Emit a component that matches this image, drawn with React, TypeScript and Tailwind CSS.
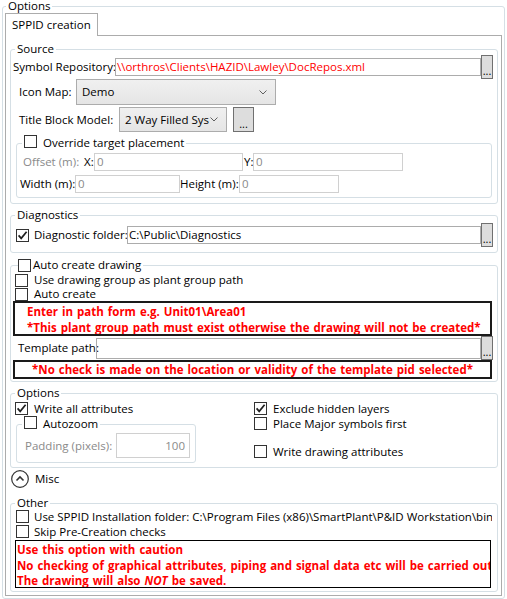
import React from 'react'

function Check({ checked }: { checked?: boolean }) {
  return (
    <span className="w-[13px] h-[13px] shrink-0 border border-[#333333] bg-white flex items-center justify-center">
      {checked && (
        <svg width="11" height="11" viewBox="0 0 11 11">
          <path d="M1.6 5.4 L4.2 8.4 L9.6 1.8" fill="none" stroke="#1f1f1f" strokeWidth="1.7" />
        </svg>
      )}
    </span>
  )
}

function Dots({ className }: { className: string }) {
  return (
    <button className={`shrink-0 border border-[#707070] bg-[#dddddd] flex items-end justify-center pb-[3px] leading-[8px] text-[11px] ${className}`}>
      ...
    </button>
  )
}

function Combo({ value, className }: { value: string; className: string }) {
  return (
    <div className={`shrink-0 border border-[#acacac] bg-gradient-to-b from-[#f0f0f0] to-[#e5e5e5] flex items-center justify-between pl-[5px] pr-[8px] ${className}`}>
      <span className="whitespace-nowrap">{value}</span>
      <svg width="8" height="5" viewBox="0 0 8 5">
        <path d="M0.5 0.5 L4 4 L7.5 0.5" fill="none" stroke="#606060" strokeWidth="1" />
      </svg>
    </div>
  )
}

function Group({
  legend,
  className,
  legendClass,
  children,
}: {
  legend: React.ReactNode
  className: string
  legendClass?: string
  children: React.ReactNode
}) {
  return (
    <fieldset className={`border border-[#d5dfe5] rounded-[3px] ${className}`}>
      <legend className={`whitespace-nowrap ${legendClass ?? 'h-[14px] leading-[14px] ml-[4px] px-[2px]'}`}>{legend}</legend>
      {children}
    </fieldset>
  )
}

export default function App() {
  return (
    <div className="w-[507px] h-[599px] bg-white overflow-hidden text-[11.5px] text-black font-['Segoe_UI','Open_Sans',sans-serif]">
      <Group legend="Options" className="ml-[2px] w-[503px] h-[599px]" legendClass="h-[12px] leading-[12px] ml-[3px] px-[2px]">
        {/* tab header */}
        <div className="mt-[1px] ml-[2px] w-[93px] h-[23px] relative z-[1] bg-white border border-b-0 border-[#acacac] flex items-center pl-[6px]">
          SPPID creation
        </div>
        <div className="-mt-px ml-[2px] w-[497px] h-[561px] border border-[#acacac] pl-[4px]">
          {/* Source */}
          <Group legend="Source" className="mt-[6px] w-[488px] h-[162px]">
            <div className="-mt-px h-[24px] flex items-center">
              <span className="w-[104px] pl-[2px] whitespace-nowrap">Symbol Repository:</span>
              <div className="w-[366px] h-[18px] border border-[#acacac] flex items-center pl-[1px] text-[#ff0000] whitespace-nowrap overflow-hidden">
                \\orthros\Clients\HAZID\Lawley\DocRepos.xml
              </div>
              <Dots className="w-[12px] h-[24px]" />
            </div>
            <div className="h-[26px] flex items-center">
              <span className="w-[65px] pl-[8px] whitespace-nowrap">Icon Map:</span>
              <Combo value="Demo" className="w-[200px] h-[26px]" />
            </div>
            <div className="mt-[2px] h-[25px] flex items-center">
              <span className="w-[108px] pl-[8px] whitespace-nowrap">Title Block Model:</span>
              <Combo value="2 Way Filled Sys" className="w-[108px] h-[25px]" />
              <Dots className="ml-[6px] w-[21px] h-[25px]" />
            </div>
            <Group
              className="mt-[4px] ml-[5px] w-[476px] h-[62px]"
              legendClass="h-[14px] ml-[5px] pl-[2px] pr-[2px]"
              legend={
                <span className="flex items-center h-[14px] gap-[6px]">
                  <span className="mb-[3px]"><Check /></span>
                  Override target placement
                </span>
              }
            >
              <div className="mt-[3px] h-[18px] flex items-center">
                <span className="w-[67px] pl-[6px] text-[#8a8a8a] whitespace-nowrap">Offset (m):</span>
                <span className="w-[10px]">X:</span>
                <div className="w-[149px] h-[18px] border border-[#d0d0d0] pl-[2px] text-[#8a8a8a] flex items-center">0</div>
                <span className="w-[10px] pl-[1px]">Y:</span>
                <div className="w-[150px] h-[18px] border border-[#d0d0d0] pl-[2px] text-[#8a8a8a] flex items-center">0</div>
              </div>
              <div className="mt-[4px] h-[18px] flex items-center">
                <span className="w-[58px] pl-[3px] whitespace-nowrap">Width (m):</span>
                <div className="w-[105px] h-[18px] border border-[#d0d0d0] pl-[2px] text-[#8a8a8a] flex items-center">0</div>
                <span className="w-[59px] whitespace-nowrap">Height (m):</span>
                <div className="w-[100px] h-[18px] border border-[#d0d0d0] pl-[2px] text-[#8a8a8a] flex items-center">0</div>
              </div>
            </Group>
          </Group>

          {/* Diagnostics */}
          <Group legend="Diagnostics" className="mt-[4px] w-[488px] h-[45px]">
            <div className="mt-[1px] h-[24px] flex items-center pl-[5px]">
              <Check checked />
              <span className="ml-[5px] w-[93px] whitespace-nowrap">Diagnostic folder:</span>
              <div className="w-[354px] h-[18px] border border-[#acacac] pl-[1px] flex items-center whitespace-nowrap">
                C:\Public\Diagnostics
              </div>
              <Dots className="w-[12px] h-[24px]" />
            </div>
          </Group>

          {/* Auto create drawing */}
          <Group
            className="mt-[5px] w-[488px] h-[124px]"
            legendClass="h-[14px] ml-[7px] pr-[2px]"
            legend={
              <span className="flex items-center h-[14px] gap-[2px]">
                <Check />
                Auto create drawing
              </span>
            }
          >
            <div className="mt-[1px] h-[14px] flex items-center pl-[4px] gap-[6px]">
              <Check />
              <span>Use drawing group as plant group path</span>
            </div>
            <div className="h-[14px] flex items-center pl-[4px] gap-[6px]">
              <Check />
              <span>Auto create</span>
            </div>
            <div className="ml-[2px] w-[479px] h-[35px] border-2 border-[#1a1a1a] pl-[12px] pt-[1px] text-[#ff0000] font-bold leading-[16px] [word-spacing:1px] whitespace-nowrap overflow-hidden">
              <div>Enter in path form e.g. Unit01\Area01</div>
              <div>*This plant group path must exist otherwise the drawing will not be created*</div>
            </div>
            <div className="h-[24px] flex items-center">
              <span className="w-[85px] pl-[7px] whitespace-nowrap">Template path:</span>
              <div className="w-[385px] h-[21px] border border-[#acacac]" />
              <Dots className="w-[12px] h-[24px]" />
            </div>
            <div className="ml-[2px] w-[479px] h-[19px] border-2 border-[#1a1a1a] text-center text-[#ff0000] font-bold leading-[15px] [word-spacing:1px] whitespace-nowrap overflow-hidden">
              *No check is made on the location or validity of the template pid selected*
            </div>
          </Group>

          {/* Options */}
          <Group legend="Options" className="mt-[4px] w-[488px] h-[82px]">
            <div className="flex">
              <div className="w-[243px]">
                <div className="mt-[1px] h-[15px] flex items-center pl-[4px] gap-[6px]">
                  <Check checked />
                  <span>Write all attributes</span>
                </div>
                <Group
                  className="ml-[5px] w-[180px] h-[47px]"
                  legendClass="h-[16px] ml-[5px] pl-[2px] pr-[2px]"
                  legend={
                    <span className="flex items-center h-[16px] gap-[6px]">
                      <span className="mb-[3px]"><Check /></span>
                      Autozoom
                    </span>
                  }
                >
                  <div className="mt-[1px] h-[25px] flex items-center">
                    <span className="w-[99px] pl-[8px] text-[#8a8a8a] whitespace-nowrap">Padding (pixels):</span>
                    <div className="w-[74px] h-[25px] border border-[#d0d0d0] pr-[4px] text-[#8a8a8a] flex items-center justify-end">100</div>
                  </div>
                </Group>
              </div>
              <div className="flex-1">
                <div className="mt-[1px] h-[15px] flex items-center gap-[6px]">
                  <Check checked />
                  <span>Exclude hidden layers</span>
                </div>
                <div className="h-[15px] flex items-center gap-[6px]">
                  <Check />
                  <span>Place Major symbols first</span>
                </div>
                <div className="mt-[13px] h-[15px] flex items-center gap-[6px]">
                  <Check />
                  <span>Write drawing attributes</span>
                </div>
              </div>
            </div>
          </Group>

          {/* Misc */}
          <div className="mt-[2px] h-[18px] flex items-center ml-[1px] gap-[6px]">
            <svg width="18" height="18" viewBox="0 0 18 18">
              <circle cx="9" cy="9" r="8.3" fill="white" stroke="#333333" strokeWidth="1.2" />
              <path d="M5.5 10.5 L9 7 L12.5 10.5" fill="none" stroke="#333333" strokeWidth="1.6" />
            </svg>
            <span>Misc</span>
          </div>

          {/* Other */}
          <Group legend="Other" className="mt-[8px] w-[488px] h-[96px]">
            <div className="-mt-px h-[15px] flex items-center pl-[5px] gap-[5px] w-[481px] overflow-hidden whitespace-nowrap">
              <Check />
              <span>Use SPPID Installation folder: C:\Program Files (x86)\SmartPlant\P&amp;ID Workstation\bin\</span>
            </div>
            <div className="h-[15px] flex items-center pl-[5px] gap-[5px]">
              <Check />
              <span>Skip Pre-Creation checks</span>
            </div>
            <div className="mt-[1px] ml-[4px] w-[476px] h-[48px] border border-black pl-[1px] pt-[1px] text-[#ff0000] font-bold leading-[15.5px] [word-spacing:1px] whitespace-nowrap overflow-hidden">
              <div>Use this option with caution</div>
              <div>No checking of graphical attributes, piping and signal data etc will be carried out</div>
              <div>
                The drawing will also <i>NOT</i> be saved.
              </div>
            </div>
          </Group>
        </div>
      </Group>
    </div>
  )
}
